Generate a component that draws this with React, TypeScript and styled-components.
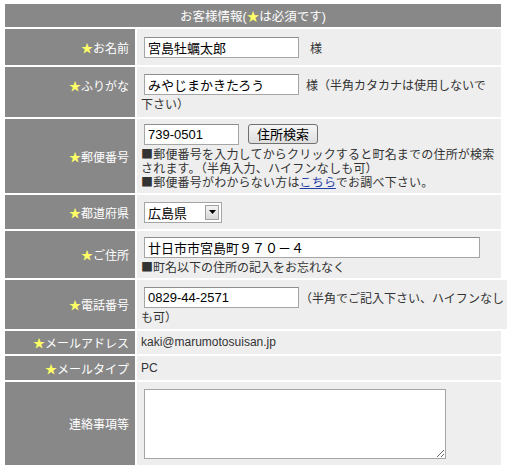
import styled, { createGlobalStyle } from 'styled-components'

const GlobalStyle = createGlobalStyle`
  body {
    margin: 0;
    background: #ffffff;
    font-family: 'Liberation Sans', 'Noto Sans CJK JP', sans-serif;
  }
`

const Page = styled.div`
  padding: 4px 0 0 5px;
`

const Table = styled.div`
  width: 496px;
  display: flex;
  flex-direction: column;
  gap: 2px;
`

const Header = styled.div`
  height: 23px;
  background: #888888;
  color: #ffffff;
  font-size: 12.5px;
  display: flex;
  align-items: center;
  justify-content: center;
`

const Row = styled.div<{ $h: number }>`
  display: grid;
  grid-template-columns: 130px 1fr;
  column-gap: 2px;
  height: ${(p) => p.$h}px;
`

const Label = styled.div<{ $shift?: number }>`
  background: #888888;
  color: #ffffff;
  font-family: 'Noto Sans CJK JP', sans-serif;
  font-size: 12px;
  display: flex;
  align-items: center;
  justify-content: flex-end;
  padding: 0 6px ${(p) => p.$shift ?? 0}px 0;
`

const Star = styled.span`
  color: #ffff66;
`

const Cell = styled.div<{ $latin?: boolean }>`
  background: #eeeeee;
  color: #333333;
  font-family: ${(p) =>
    p.$latin
      ? "'Liberation Sans', 'Noto Sans CJK JP', sans-serif"
      : "'Noto Sans CJK JP', sans-serif"};
  font-size: 12px;
  line-height: 13px;
  display: flex;
  flex-direction: column;
  justify-content: center;
  padding: 0 4px;
`

const Line = styled.div`
  display: flex;
  align-items: center;
`

const Note = styled.div`
  margin-top: 2px;
  white-space: nowrap;
`

const NoteLine = styled.div`
  height: 14px;
  line-height: 14px;
  white-space: nowrap;
  letter-spacing: 0.2px;
`

const Input = styled.input<{ $w: number }>`
  width: ${(p) => p.$w}px;
  height: 21px;
  box-sizing: border-box;
  margin: 0 0 0 3px;
  padding: 0 3px;
  border: 1px solid #a5a5a5;
  border-top-color: #8e8e8e;
  background: #ffffff;
  color: #000000;
  font-family: 'Liberation Sans', 'Noto Sans CJK JP', sans-serif;
  font-size: 13px;
  outline: none;
`

const Suffix = styled.span<{ $gap: number }>`
  margin-left: ${(p) => p.$gap}px;
  white-space: nowrap;
`

const Button = styled.button`
  height: 20px;
  margin-left: 9px;
  padding: 0 8px;
  border: 1px solid #707070;
  border-radius: 3px;
  background: linear-gradient(#f6f6f6, #dedede);
  color: #000000;
  font-family: 'Noto Sans CJK JP', sans-serif;
  font-size: 13px;
  line-height: 18px;
`

const SelectBox = styled.div`
  width: 78px;
  height: 21px;
  box-sizing: border-box;
  margin-left: 3px;
  display: flex;
  align-items: center;
  border: 1px solid #a5a5a5;
  background: #ffffff;
`

const Select = styled.select`
  flex: 1;
  min-width: 0;
  height: 100%;
  appearance: none;
  border: none;
  background: transparent;
  padding: 0 0 0 3px;
  color: #000000;
  font-family: 'Noto Sans CJK JP', sans-serif;
  font-size: 13px;
  outline: none;
`

const Arrow = styled.span`
  width: 14px;
  height: 15px;
  margin-right: 2px;
  box-sizing: border-box;
  border: 1px solid #a0a0a0;
  background: linear-gradient(#f4f4f4, #d8d8d8);
  display: flex;
  align-items: center;
  justify-content: center;
`

const Link = styled.a`
  color: #1f3fa6;
  text-decoration: underline;
`

const TextArea = styled.textarea`
  width: 302px;
  height: 70px;
  box-sizing: border-box;
  margin-left: 3px;
  border: 1px solid #a5a5a5;
  background: #ffffff;
  font-family: 'Noto Sans CJK JP', sans-serif;
  font-size: 13px;
  outline: none;
`

export default function App() {
  return (
    <Page>
      <GlobalStyle />
      <Table>
        <Header>
          お客様情報(<Star>★</Star>は必須です)
        </Header>

        <Row $h={36}>
          <Label>
            <Star>★</Star>お名前
          </Label>
          <Cell>
            <Line>
              <Input $w={155} defaultValue="宮島牡蠣太郎" />
              <Suffix $gap={11}>様</Suffix>
            </Line>
          </Cell>
        </Row>

        <Row $h={50}>
          <Label $shift={14}>
            <Star>★</Star>ふりがな
          </Label>
          <Cell>
            <Line>
              <Input $w={155} defaultValue="みやじまかきたろう" />
              <Suffix $gap={7}>様（半角カタカナは使用しないで</Suffix>
            </Line>
            <Note>下さい）</Note>
          </Cell>
        </Row>

        <Row $h={74}>
          <Label>
            <Star>★</Star>郵便番号
          </Label>
          <Cell>
            <Line>
              <Input $w={95} defaultValue="739-0501" />
              <Button type="button">住所検索</Button>
            </Line>
            <Note>
              <NoteLine>■郵便番号を入力してからクリックすると町名までの住所が検索</NoteLine>
              <NoteLine>されます。（半角入力、ハイフンなしも可）</NoteLine>
              <NoteLine>
                ■郵便番号がわからない方は<Link href="#">こちら</Link>でお調べ下さい。
              </NoteLine>
            </Note>
          </Cell>
        </Row>

        <Row $h={34}>
          <Label>
            <Star>★</Star>都道府県
          </Label>
          <Cell>
            <Line>
              <SelectBox>
                <Select defaultValue="広島県">
                  <option>広島県</option>
                </Select>
                <Arrow>
                  <svg width="7" height="4" viewBox="0 0 7 4">
                    <path d="M0 0h7L3.5 4z" fill="#000" />
                  </svg>
                </Arrow>
              </SelectBox>
            </Line>
          </Cell>
        </Row>

        <Row $h={47}>
          <Label>
            <Star>★</Star>ご住所
          </Label>
          <Cell>
            <Line>
              <Input $w={336} defaultValue="廿日市市宮島町９７０－４" />
            </Line>
            <Note>■町名以下の住所の記入をお忘れなく</Note>
          </Cell>
        </Row>

        <Row $h={49}>
          <Label>
            <Star>★</Star>電話番号
          </Label>
          <Cell>
            <Line>
              <Input $w={155} defaultValue="0829-44-2571" />
              <Suffix $gap={1}>（半角でご記入下さい、ハイフンなし</Suffix>
            </Line>
            <Note>も可）</Note>
          </Cell>
        </Row>

        <Row $h={23}>
          <Label>
            <Star>★</Star>メールアドレス
          </Label>
          <Cell $latin>kaki@marumotosuisan.jp</Cell>
        </Row>

        <Row $h={24}>
          <Label>
            <Star>★</Star>メールタイプ
          </Label>
          <Cell $latin>PC</Cell>
        </Row>

        <Row $h={83}>
          <Label>連絡事項等</Label>
          <Cell>
            <TextArea />
          </Cell>
        </Row>
      </Table>
    </Page>
  )
}
